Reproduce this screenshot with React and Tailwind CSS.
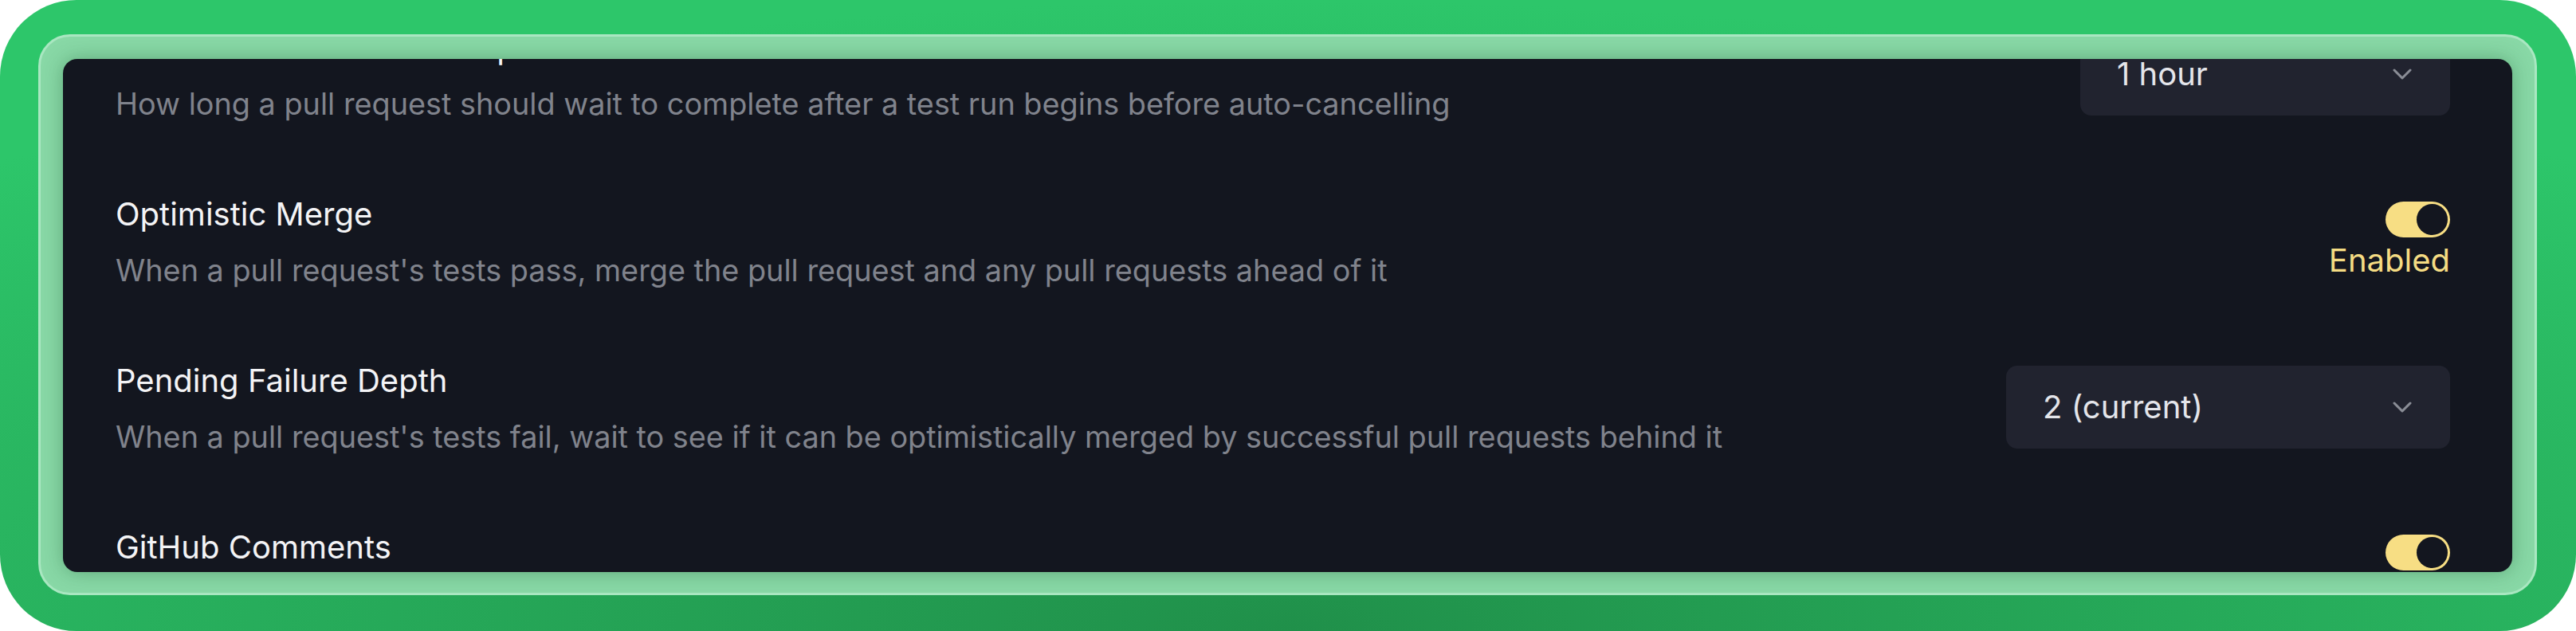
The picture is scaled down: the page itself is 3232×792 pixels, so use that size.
import React, { useState } from 'react'

const font = { fontFamily: 'Inter, "Noto Sans", sans-serif' };

const Chevron = () => (
  <svg width="24" height="15" viewBox="0 0 24 15" fill="none" className="shrink-0">
    <polyline points="2,2 12,12 22,2" stroke="#8a8d96" strokeWidth="3" strokeLinecap="round" strokeLinejoin="round" />
  </svg>
);

const Select = ({ value, width }) => (
  <button className={`flex h-[104px] items-center justify-between rounded-[14px] bg-[#21232f] pl-[46px] pr-[48px] text-left ${width}`}>
    <span className="text-[40px] leading-[48px] text-[#e4e5ea]">{value}</span>
    <Chevron />
  </button>
);

const Toggle = ({ on, onClick }) => (
  <div className="flex flex-col items-end">
    <button
      onClick={onClick}
      className={`flex h-[45px] w-[81px] items-center rounded-full p-[3px] ${on ? 'justify-end bg-[#f7de84]' : 'justify-start bg-[#3a3d4a]'}`}
    >
      <span className="block h-[39px] w-[39px] rounded-full bg-[#13161f]" />
    </button>
    <span className="mt-[5px] text-[40px] leading-[48px] text-[#f5dc83]">{on ? 'Enabled' : 'Disabled'}</span>
  </div>
);

const Row = ({ title, desc, children }) => (
  <div className="flex items-center justify-between">
    <div className="flex flex-col">
      <h3 className="text-[40px] leading-[56px] text-[#f4f4f6]">{title}</h3>
      <p className="mt-[18px] text-[37.8px] leading-[48px] text-[#80838c]">{desc}</p>
    </div>
    {children}
  </div>
);

const App = () => {
  const [optimistic, setOptimistic] = useState(true);
  const [comments, setComments] = useState(true);

  return (
    <div className="h-[792px] w-[3232px] bg-white" style={font}>
      <div className="h-full w-full rounded-[96px] bg-[radial-gradient(ellipse_75%_100%_at_50%_100%,#20904a,#2dc66a)] pb-[45px] pl-[48px] pr-[49px] pt-[43px]">
        {/* frame */}
        <div className="h-full w-full rounded-[40px] border-[3px] border-[#a9e7c1] bg-[#88d8a6] px-[28px] pb-[26px] pt-[28px]">
          {/* settings panel */}
          <div className="h-full w-full overflow-hidden rounded-[18px] bg-[#13161f] shadow-[0_0_24px_rgba(20,80,40,0.35)]">
            <div className="-mt-[42px] flex flex-col gap-[87px] pl-[66px] pr-[78px]">
              <Row
                title="Timeout for Tests to Complete"
                desc="How long a pull request should wait to complete after a test run begins before auto-cancelling"
              >
                <Select value="1 hour" width="w-[464px]" />
              </Row>

              <Row
                title="Optimistic Merge"
                desc="When a pull request's tests pass, merge the pull request and any pull requests ahead of it"
              >
                <Toggle on={optimistic} onClick={() => setOptimistic(!optimistic)} />
              </Row>

              <Row
                title="Pending Failure Depth"
                desc="When a pull request's tests fail, wait to see if it can be optimistically merged by successful pull requests behind it"
              >
                <Select value="2 (current)" width="w-[557px]" />
              </Row>

              <Row
                title="GitHub Comments"
                desc="Post a comment on the pull request when its merge queue status changes"
              >
                <Toggle on={comments} onClick={() => setComments(!comments)} />
              </Row>
            </div>
          </div>
        </div>
      </div>
    </div>
  );
};

export default App;
